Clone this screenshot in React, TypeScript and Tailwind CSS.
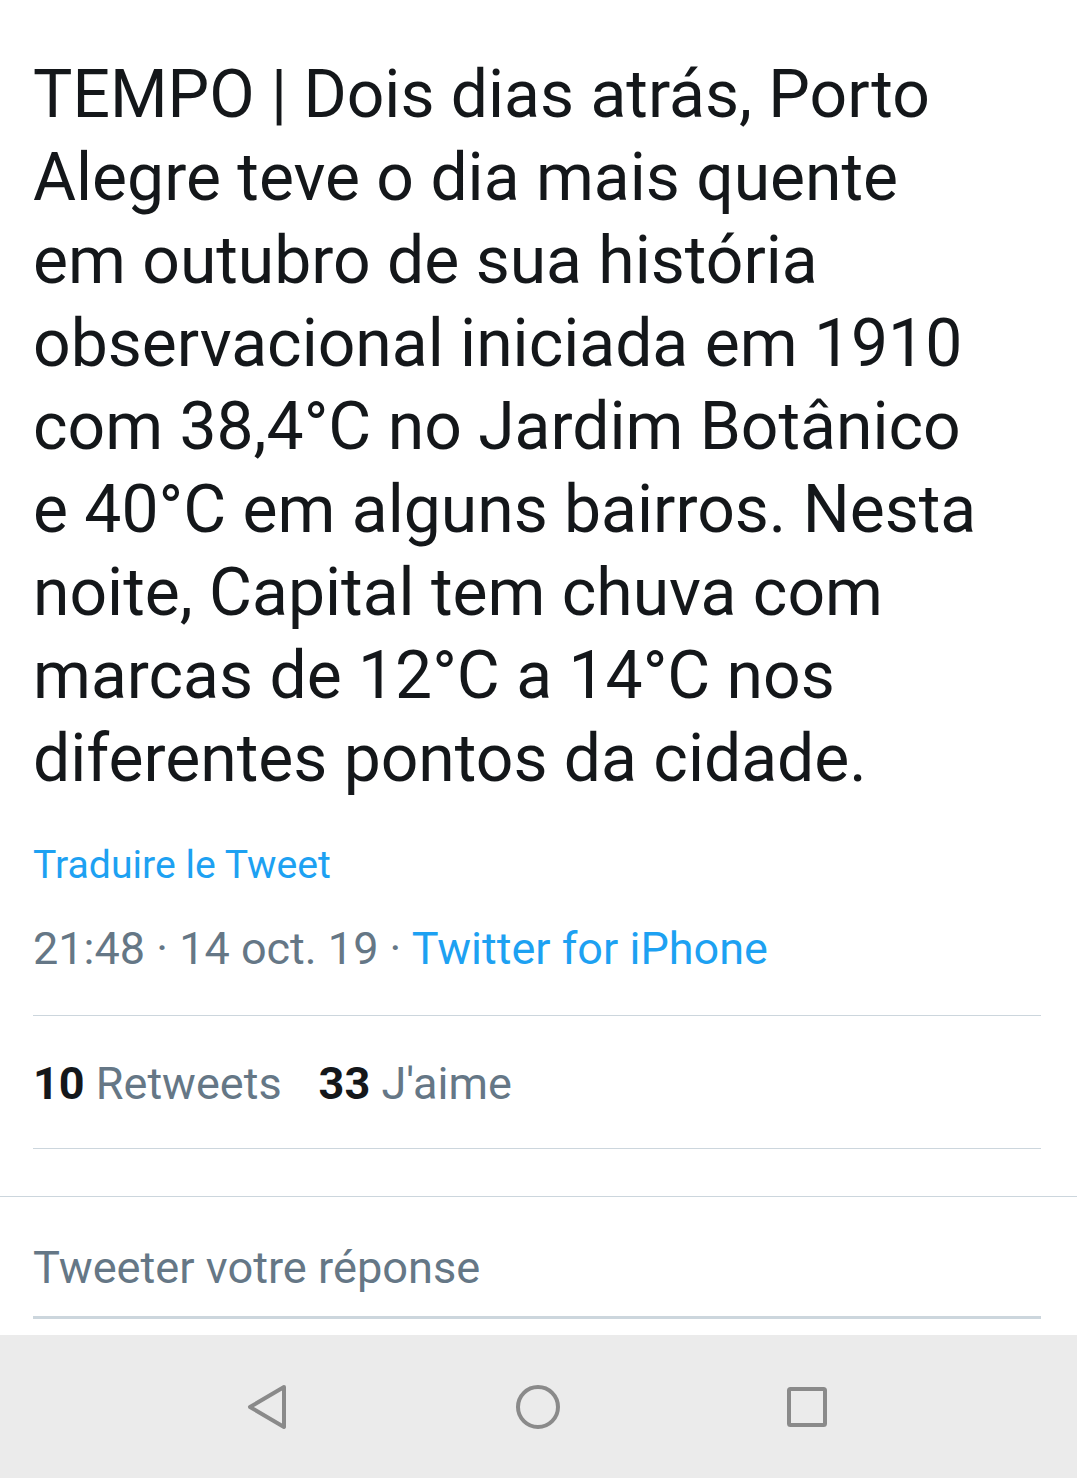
import { useState } from "react";

const body =
  "TEMPO | Dois dias atrás, Porto Alegre teve o dia mais quente em outubro de sua história observacional iniciada em 1910 com 38,4°C no Jardim Botânico e 40°C em alguns bairros. Nesta noite, Capital tem chuva com marcas de 12°C a 14°C nos diferentes pontos da cidade.";

function NavBar() {
  return (
    <div className="h-[143px] bg-[#ebebeb] flex items-center pl-[245px] gap-[225px]">
      <svg width="44" height="48" viewBox="0 0 44 48" fill="none" stroke="#8a8a8a" strokeWidth="4" strokeLinejoin="round">
        <path d="M39 4 L5 24 L39 44 Z" />
      </svg>
      <svg width="48" height="48" viewBox="0 0 48 48" fill="none" stroke="#8a8a8a" strokeWidth="4">
        <ellipse cx="24" cy="24" rx="20" ry="20" />
      </svg>
      <svg width="40" height="40" viewBox="0 0 40 40" fill="none" stroke="#8a8a8a" strokeWidth="4" strokeLinejoin="round">
        <rect x="2" y="2" width="36" height="36" rx="1.5" />
      </svg>
    </div>
  );
}

export default function App() {
  const [reply, setReply] = useState("");

  return (
    <div className="w-[1077px] h-[1478px] bg-white flex flex-col font-['Roboto',sans-serif] overflow-hidden">
      <div className="pl-[33px] pr-[36px] flex-1 flex flex-col">
        <p className="pt-[53px] w-[955px] text-[#14171a] text-[66px] leading-[83px]">{body}</p>

        <a className="mt-[39px] text-[#1da1f2] text-[39.2px] leading-[52px]">Traduire le Tweet</a>

        <div className="mt-[30px] text-[45px] leading-[56px] text-[#657786]">
          21:48 · 14 oct. 19 · <span className="text-[#1da1f2]">Twitter for iPhone</span>
        </div>

        <div className="mt-[38px] border-t border-[#ccd6dd]" />

        <div className="pt-[40px] pb-[36px] text-[45px] leading-[56px] text-[#657786] flex gap-[37px]">
          <span>
            <b className="text-[#14171a] font-bold">10</b> Retweets
          </span>
          <span>
            <b className="text-[#14171a] font-bold">33</b> J'aime
          </span>
        </div>

        <div className="border-t border-[#ccd6dd]" />
      </div>

      <div className="mt-[31px] border-t border-[#ccd6dd]" />
      <div className="pl-[33px] pr-[36px]">
        <input
          value={reply}
          onChange={(e) => setReply(e.target.value)}
          placeholder="Tweeter votre réponse"
          className="w-full h-[122px] pt-[22px] bg-transparent outline-none text-[45.2px] text-[#14171a] placeholder:text-[#657786] border-b-[3px] border-[#ccd6dd]"
        />
      </div>
      <div className="h-[16px]" />
      <NavBar />
    </div>
  );
}
